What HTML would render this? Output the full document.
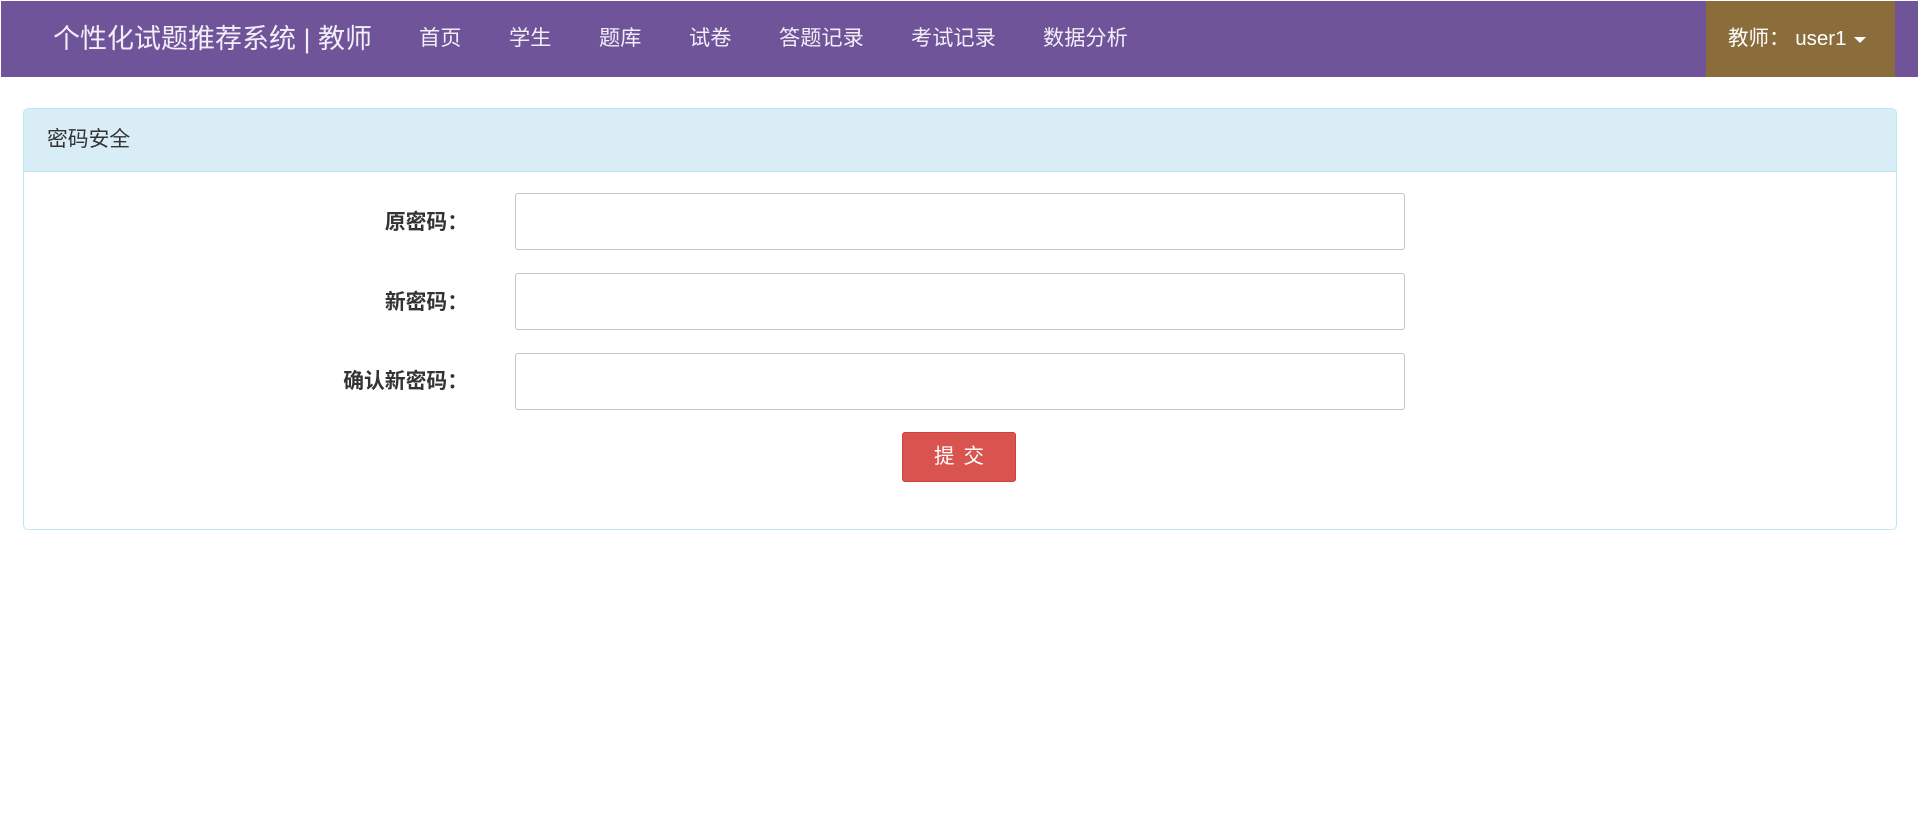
<!DOCTYPE html>
<html><head><meta charset="utf-8"><style>
*{box-sizing:border-box;margin:0;padding:0}
body{width:1920px;height:824px;background:#fff;font-family:"Liberation Sans","Noto Sans CJK SC",sans-serif;position:relative;overflow:hidden}
.nav{position:absolute;left:1px;top:1px;width:1917px;height:76px;background:#6f5499;color:#fff}
.nav span{position:absolute;top:0;line-height:76px;font-size:21.2px;color:#f2eef8}
.brand{font-size:27px!important;left:52px}
.user{position:absolute;left:1705px;top:0;width:189px;height:76px;background:#8a6d3b;color:#fff;font-size:20.5px;line-height:76px;padding-left:22px;white-space:nowrap}
.caret{display:inline-block;width:0;height:0;border-left:6px solid transparent;border-right:6px solid transparent;border-top:6px solid #fff;vertical-align:middle;margin-left:8px}
.panel{position:absolute;left:23px;top:108px;width:1874px;height:422px;border:1px solid #bce8f1;border-radius:5px}
.ph{height:63px;background:#d9edf7;border-bottom:1px solid #bce8f1;font-size:20.8px;color:#333;line-height:62px;padding-left:23px;border-radius:4px 4px 0 0}
.lbl{position:absolute;right:1452px;font-size:20.8px;font-weight:bold;color:#333}
.inp{position:absolute;left:515px;width:890px;height:57px;border:1px solid #cbc1c6;border-radius:3px}
.btn{position:absolute;left:902px;top:432px;width:114px;height:50px;background:#d9534f;border:1px solid #d43f3a;border-radius:3px;color:#fff;font-size:20.5px;text-align:center;line-height:48px;letter-spacing:9px;padding-left:9px}
</style></head><body>
<div class="nav">
<span class="brand">个性化试题推荐系统 | 教师</span>
<span style="left:418px">首页</span>
<span style="left:508px">学生</span>
<span style="left:598px">题库</span>
<span style="left:688px">试卷</span>
<span style="left:778px">答题记录</span>
<span style="left:910px">考试记录</span>
<span style="left:1042px">数据分析</span>
<div class="user">教师： user1<i class="caret"></i></div>
</div>
<div class="panel"><div class="ph">密码安全</div></div>
<div class="lbl" style="top:205px">原密码：</div>
<div class="inp" style="top:193px"></div>
<div class="lbl" style="top:285px">新密码：</div>
<div class="inp" style="top:273px"></div>
<div class="lbl" style="top:364px">确认新密码：</div>
<div class="inp" style="top:353px"></div>
<div class="btn">提交</div>
</body></html>
